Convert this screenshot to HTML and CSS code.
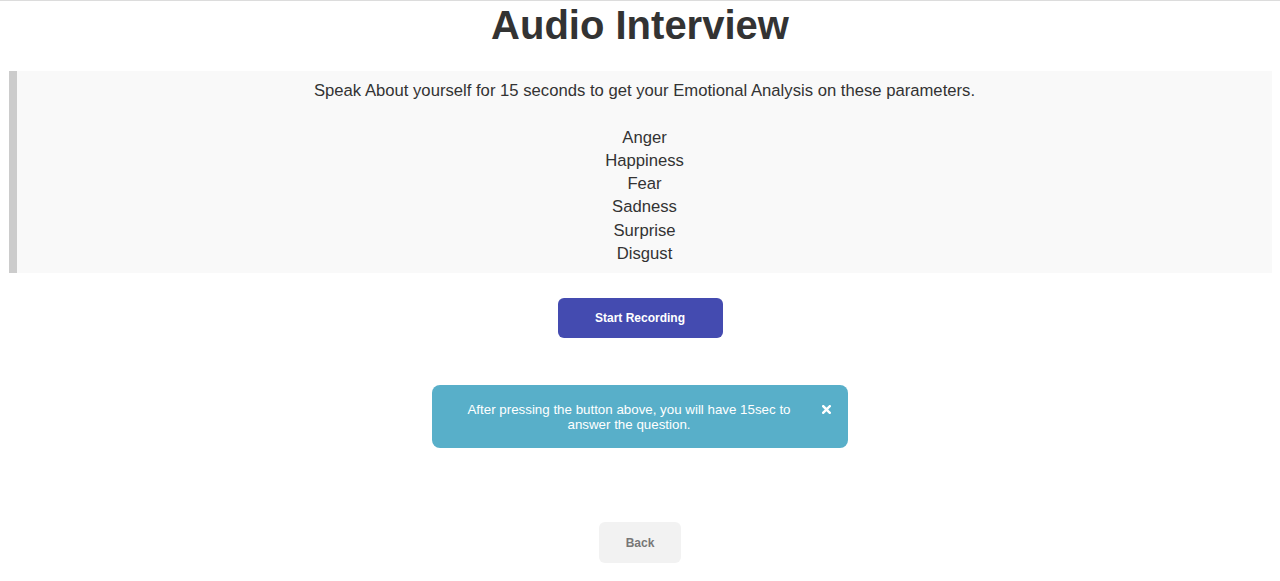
FILE: index.html
```html
<!DOCTYPE html>
<html lang="en">
<head>
<meta charset="utf-8">
<title>Audio Interview</title>
<link rel="stylesheet" href="styles.css">
</head>
<body>
<div class="page">
  <h1 class="title">Audio Interview</h1>
  <blockquote class="intro">
    <p class="lead">Speak About yourself for 15 seconds to get your Emotional Analysis on these parameters.</p>
    <ul class="params">
      <li>Anger</li>
      <li>Happiness</li>
      <li>Fear</li>
      <li>Sadness</li>
      <li>Surprise</li>
      <li>Disgust</li>
    </ul>
  </blockquote>
  <button class="btn-record" type="button">Start Recording</button>
  <div class="alert">
    <span class="alert-text">After pressing the button above, you will have 15sec to answer the question.</span>
    <span class="alert-close" aria-label="close"><svg width="9" height="9" viewBox="0 0 9 9"><path d="M1.2 1.2 L7.8 7.8 M7.8 1.2 L1.2 7.8" stroke="#fff" stroke-width="2.4" stroke-linecap="square"/></svg></span>
  </div>
  <button class="btn-back" type="button">Back</button>
</div>
</body>
</html>
```

FILE: styles.css
```css
html, body {
  margin: 0;
  padding: 0;
  background: #fff;
}
body {
  border-top: 1px solid #dcdcdc;
  font-family: "Liberation Sans", Arial, sans-serif;
  color: #333;
}
.page {
  display: flex;
  flex-direction: column;
  align-items: center;
}
.title {
  margin: 0;
  font-size: 40px;
  line-height: 48px;
  font-weight: bold;
  color: #333;
  text-align: center;
}
.intro {
  align-self: stretch;
  margin: 22px 8px 0 9px;
  padding: 8px 10px 8px;
  background: #f9f9f9;
  border-left: 8px solid #ccc;
  text-align: center;
  font-size: 16.67px;
  line-height: 23.3px;
  color: #333;
}
.lead {
  margin: 0 0 23.3px;
}
.params {
  list-style: none;
  margin: 0;
  padding: 0;
}
.btn-record {
  margin-top: 25px;
  width: 165px;
  height: 40px;
  border: none;
  border-radius: 6px;
  background: #444bb0;
  color: #fff;
  font-family: "Liberation Sans", Arial, sans-serif;
  font-weight: bold;
  font-size: 12px;
  padding: 0;
}
.alert {
  margin-top: 47px;
  width: 416px;
  height: 63px;
  box-sizing: border-box;
  background: #58afc9;
  border-radius: 8px;
  color: #fff;
  font-size: 13.33px;
  line-height: 15px;
  display: flex;
  align-items: center;
  padding: 0 17px 0 30px;
}
.alert-text {
  flex: 1;
  text-align: center;
}
.alert-close {
  align-self: flex-start;
  margin-top: 20px;
  margin-left: 26px;
  display: flex;
}
.btn-back {
  margin-top: 74px;
  width: 82px;
  height: 41px;
  border: none;
  border-radius: 6px;
  background: #f2f2f2;
  color: #777;
  font-family: "Liberation Sans", Arial, sans-serif;
  font-weight: bold;
  font-size: 12px;
  padding: 0;
}
```
